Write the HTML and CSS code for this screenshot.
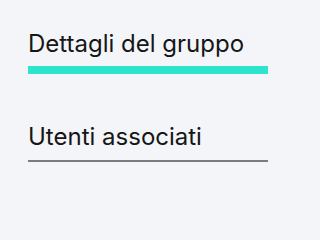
FILE: index.html
```html
<!DOCTYPE html>
<html lang="it">
<head>
<meta charset="utf-8">
<link rel="stylesheet" href="styles.css">
</head>
<body>
<nav class="tabs">
  <div class="tab tab-active">Dettagli del gruppo</div>
  <div class="tab">Utenti associati</div>
</nav>
</body>
</html>
```
FILE: styles.css
```css
html, body {
  margin: 0;
  padding: 0;
  background: #f4f5f9;
  width: 292px;
  height: 200px;
}
.tabs {
  display: flex;
  flex-direction: column;
  gap: 49px;
  padding: 30px 0 0 28px;
  width: 240px;
}
.tab {
  font-family: Inter, "Noto Sans", sans-serif;
  font-size: 24px;
  line-height: 28px;
  color: #161616;
  padding-bottom: 9px;
  border-bottom: 2px solid #7b7b80;
}
.tab-active {
  padding-bottom: 8px;
  border-bottom: 8px solid #2ee4cf;
}
```
